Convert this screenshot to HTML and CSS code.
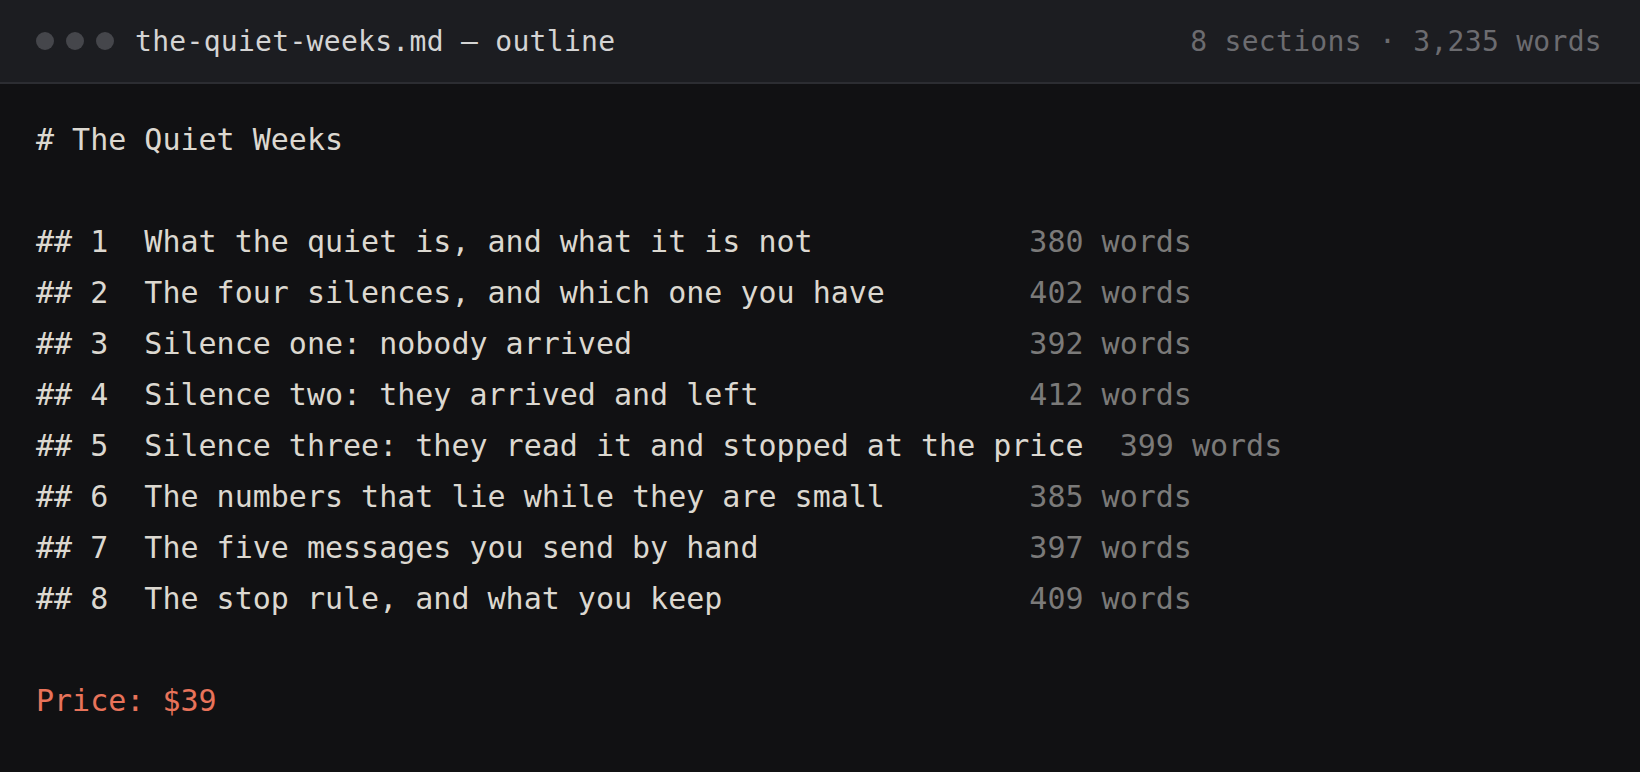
FILE: index.html
```html
<!DOCTYPE html>
<html lang="en">
<head>
<meta charset="utf-8">
<title>the-quiet-weeks.md — outline</title>
<link rel="stylesheet" href="styles.css">
</head>
<body>
<div class="window">
  <header class="titlebar">
    <div class="left">
      <div class="dots"><span class="dot"></span><span class="dot"></span><span class="dot"></span></div>
      <span class="filename">the-quiet-weeks.md — outline</span>
    </div>
    <span class="meta">8 sections · 3,235 words</span>
  </header>
  <main class="doc">
    <div class="line">#&nbsp;The Quiet Weeks</div>
    <div class="line blank"></div>
    <div class="line row"><span class="num">## 1</span><span class="title">What the quiet is, and what it is not</span><span class="wc">380 words</span></div>
    <div class="line row"><span class="num">## 2</span><span class="title">The four silences, and which one you have</span><span class="wc">402 words</span></div>
    <div class="line row"><span class="num">## 3</span><span class="title">Silence one: nobody arrived</span><span class="wc">392 words</span></div>
    <div class="line row"><span class="num">## 4</span><span class="title">Silence two: they arrived and left</span><span class="wc">412 words</span></div>
    <div class="line row"><span class="num">## 5</span><span class="title">Silence three: they read it and stopped at the price</span><span class="wc">399 words</span></div>
    <div class="line row"><span class="num">## 6</span><span class="title">The numbers that lie while they are small</span><span class="wc">385 words</span></div>
    <div class="line row"><span class="num">## 7</span><span class="title">The five messages you send by hand</span><span class="wc">397 words</span></div>
    <div class="line row"><span class="num">## 8</span><span class="title">The stop rule, and what you keep</span><span class="wc">409 words</span></div>
    <div class="line blank"></div>
    <div class="line price">Price: $39</div>
  </main>
</div>
</body>
</html>
```

FILE: styles.css
```css
html, body {
  margin: 0;
  padding: 0;
  background: #111113;
}

body {
  font-family: "DejaVu Sans Mono", "Liberation Mono", monospace;
  color: #dcd8d0;
  height: 772px;
  overflow: hidden;
}

.window {
  display: flex;
  flex-direction: column;
  min-height: 772px;
}

.titlebar {
  height: 82px;
  box-sizing: content-box;
  display: flex;
  align-items: center;
  justify-content: space-between;
  padding: 0 38px 0 36px;
  background: #1c1d21;
  border-bottom: 2px solid #2c2d32;
  font-size: 28px;
  letter-spacing: 0.3px;
}

.left {
  display: flex;
  align-items: center;
  gap: 21px;
}

.dots {
  display: flex;
  gap: 12px;
}

.dot {
  width: 18px;
  height: 18px;
  border-radius: 50%;
  background: #45464b;
}

.filename {
  color: #d4d4d4;
  white-space: pre;
}

.meta {
  color: #6c6c70;
  white-space: pre;
}

.doc {
  padding: 30px 36px 0 36px;
  font-size: 30px;
  line-height: 51px;
}

.line {
  white-space: pre;
  height: 51px;
}

.row {
  display: flex;
}

.num {
  width: 6ch;
  flex: none;
}

.title {
  min-width: 47ch;
  margin-right: 2ch;
  flex: none;
}

.wc {
  color: #7b7a79;
  flex: none;
}

.price {
  color: #e8735a;
}
```
